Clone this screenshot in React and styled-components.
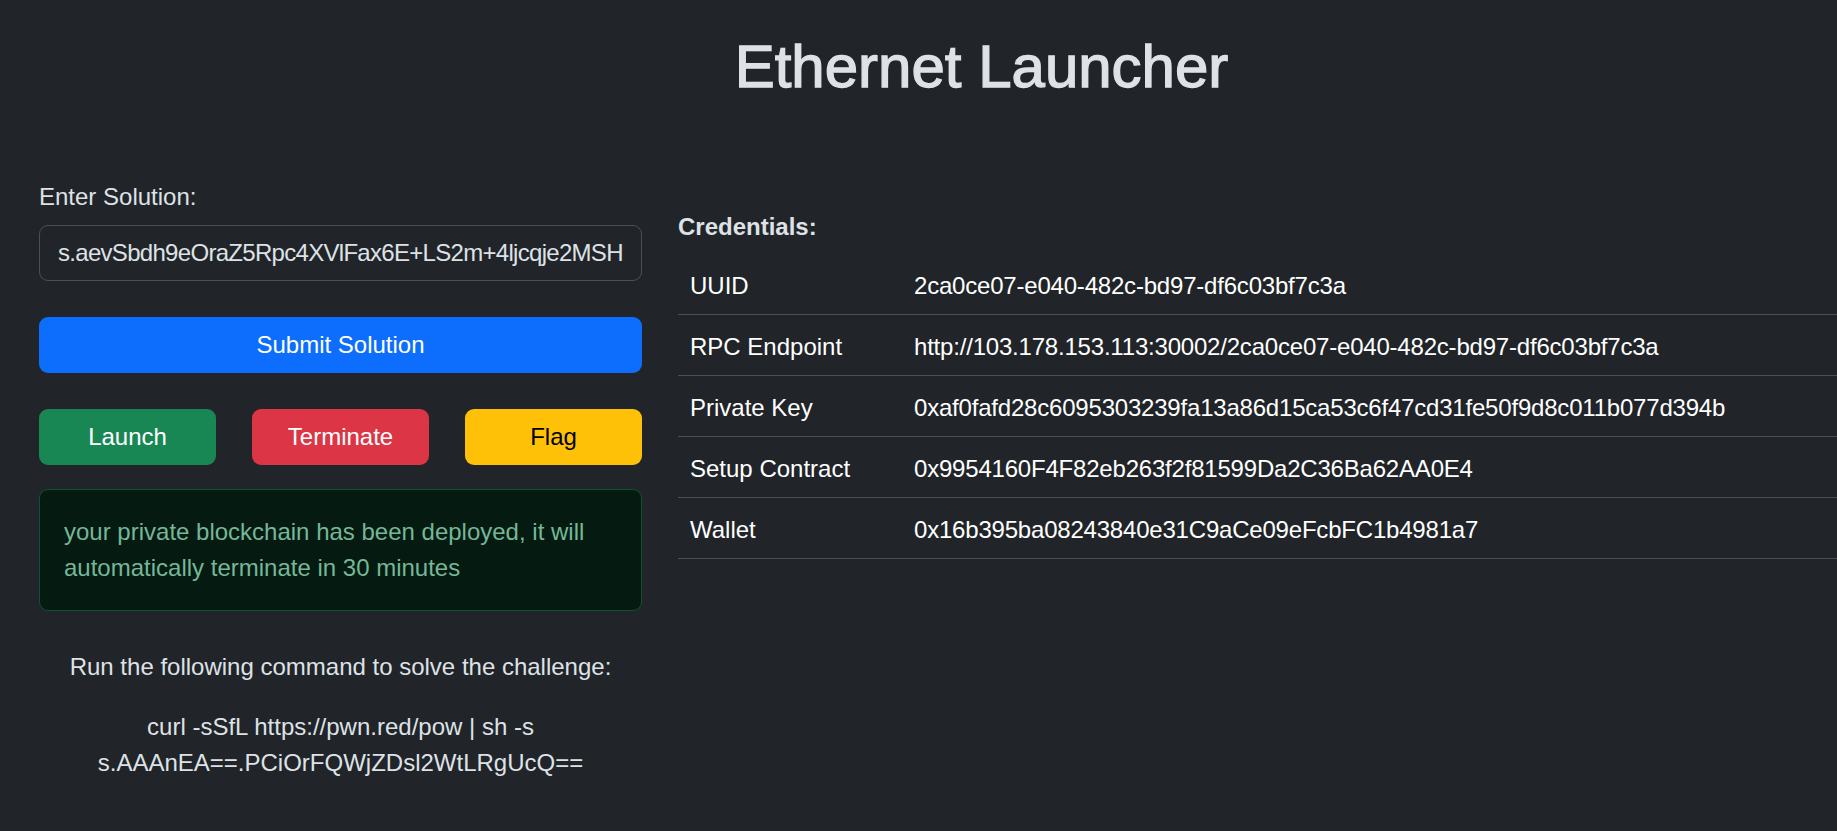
import React from 'react'
import styled, {createGlobalStyle} from 'styled-components'

const COLORS = {
  BG: '#212529',
  TEXT: '#dee2e6',
  WHITE: '#ffffff',
  BORDER: '#495057',
  PRIMARY: '#0d6efd',
  SUCCESS: '#198754',
  DANGER: '#dc3545',
  WARNING: '#ffc107',
  ALERT_BG: '#051b11',
  ALERT_BORDER: '#0f5132',
  ALERT_TEXT: '#75b798',
}

const FONT = `"Liberation Sans", Arial, sans-serif`

const GlobalStyle = createGlobalStyle`
  html, body {
    margin: 0;
    padding: 0;
    background-color: ${COLORS.BG};
    overflow: hidden;
  }

  body {
    color: ${COLORS.TEXT};
    font-family: ${FONT};
    font-size: 24px;
    line-height: 1.5;
  }

  * {
    box-sizing: border-box;
  }
`

const Page = styled.div`
  width: 1963px;
  min-height: 831px;
  padding: 31px 39px 0;
`

const Title = styled.h1`
  margin: 0;
  text-align: center;
  font-size: 60px;
  line-height: 72px;
  font-weight: 500;
  -webkit-text-stroke: 1.3px ${COLORS.TEXT};
  color: ${COLORS.TEXT};
`

const Row = styled.div`
  display: flex;
  gap: 36px;
  margin-top: 76px;
`

const LeftCol = styled.div`
  width: 603px;
  flex-shrink: 0;
  display: flex;
  flex-direction: column;
`

const RightCol = styled.div`
  flex-grow: 1;
  padding-top: 30px;
`

const Label = styled.label`
  display: block;
  margin-bottom: 10px;
`

const Input = styled.input`
  width: 100%;
  height: 56px;
  padding: 0 18px;
  border: 1px solid ${COLORS.BORDER};
  border-radius: 9px;
  background-color: ${COLORS.BG};
  color: ${COLORS.TEXT};
  font-family: ${FONT};
  font-size: 24px;
  letter-spacing: -0.7px;
  outline: none;
`

const Button = styled.button`
  height: 56px;
  width: 100%;
  border: none;
  border-radius: 9px;
  background-color: ${(props) => props.color ?? COLORS.PRIMARY};
  color: ${(props) => props.textColor ?? COLORS.WHITE};
  font-family: ${FONT};
  font-size: 24px;
  line-height: 36px;
  padding: 0 18px;
  cursor: pointer;
`

const SubmitButton = styled(Button)`
  margin-top: 36px;
`

const ActionRow = styled.div`
  margin-top: 36px;
  display: grid;
  grid-template-columns: repeat(3, 1fr);
  gap: 36px;
`

const Alert = styled.div`
  margin-top: 24px;
  padding: 24px;
  border: 1px solid ${COLORS.ALERT_BORDER};
  border-radius: 9px;
  background-color: ${COLORS.ALERT_BG};
  color: ${COLORS.ALERT_TEXT};
`

const Instructions = styled.div`
  margin-top: 38px;
  text-align: center;

  p {
    margin: 0 0 24px;
  }
`

const SectionTitle = styled.div`
  font-weight: 700;
  margin-bottom: 9px;
`

const Table = styled.table`
  width: 100%;
  border-collapse: collapse;
  color: ${COLORS.WHITE};

  td {
    padding: 14px 12px 10px;
    border-bottom: 1px solid ${COLORS.BORDER};
    white-space: nowrap;
  }

  td:first-child {
    width: 224px;
  }

  td:last-child {
    letter-spacing: -0.2px;
  }
`

const CREDENTIALS = [
  ['UUID', '2ca0ce07-e040-482c-bd97-df6c03bf7c3a'],
  ['RPC Endpoint', 'http://103.178.153.113:30002/2ca0ce07-e040-482c-bd97-df6c03bf7c3a'],
  ['Private Key', '0xaf0fafd28c6095303239fa13a86d15ca53c6f47cd31fe50f9d8c011b077d394b'],
  ['Setup Contract', '0x9954160F4F82eb263f2f81599Da2C36Ba62AA0E4'],
  ['Wallet', '0x16b395ba08243840e31C9aCe09eFcbFC1b4981a7'],
]

const App = () => {
  return (
    <>
      <GlobalStyle />
      <Page>
        <Title>Ethernet Launcher</Title>
        <Row>
          <LeftCol>
            <Label htmlFor="solution">Enter Solution:</Label>
            <Input
              id="solution"
              readOnly
              value="s.aevSbdh9eOraZ5Rpc4XVlFax6E+LS2m+4ljcqje2MSH"
            />
            <SubmitButton>Submit Solution</SubmitButton>
            <ActionRow>
              <Button color={COLORS.SUCCESS}>Launch</Button>
              <Button color={COLORS.DANGER}>Terminate</Button>
              <Button color={COLORS.WARNING} textColor="#000">
                Flag
              </Button>
            </ActionRow>
            <Alert>
              your private blockchain has been deployed, it will automatically
              terminate in 30 minutes
            </Alert>
            <Instructions>
              <p>Run the following command to solve the challenge:</p>
              <p>
                curl -sSfL https://pwn.red/pow | sh -s
                <br />
                s.AAAnEA==.PCiOrFQWjZDsl2WtLRgUcQ==
              </p>
            </Instructions>
          </LeftCol>
          <RightCol>
            <SectionTitle>Credentials:</SectionTitle>
            <Table>
              <tbody>
                {CREDENTIALS.map(([name, value]) => (
                  <tr key={name}>
                    <td>{name}</td>
                    <td>{value}</td>
                  </tr>
                ))}
              </tbody>
            </Table>
          </RightCol>
        </Row>
      </Page>
    </>
  )
}

export default App
